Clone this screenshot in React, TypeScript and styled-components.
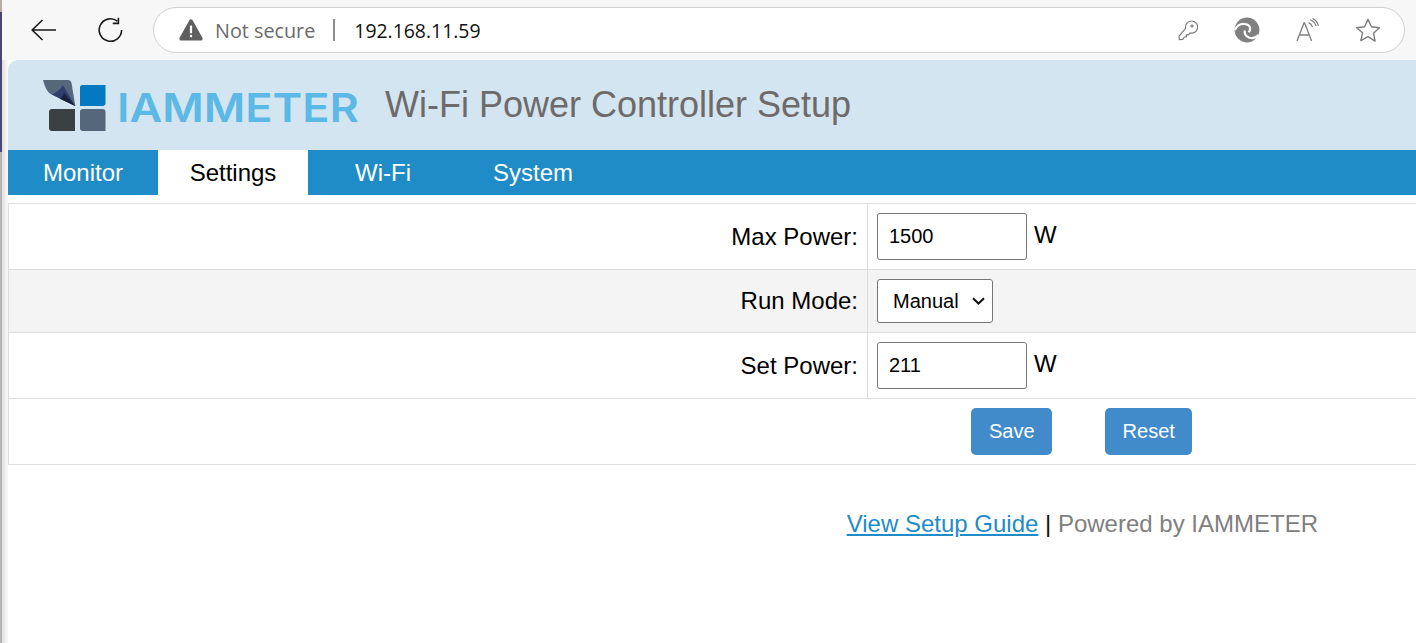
import React from 'react';
import styled, { createGlobalStyle } from 'styled-components';

const GlobalStyle = createGlobalStyle`
  html, body {
    margin: 0;
    padding: 0;
    height: 100%;
    overflow: hidden;
    background: #fff;
  }
  #root {
    height: 100%;
  }
  * {
    box-sizing: border-box;
  }
`;

const tabs = ['Monitor', 'Settings', 'Wi-Fi', 'System'];

const chevron =
  "url(\"data:image/svg+xml,%3Csvg xmlns='http://www.w3.org/2000/svg' width='13' height='8' viewBox='0 0 13 8'%3E%3Cpath d='M1 1.200l5.500 5.300L12 1.200' fill='none' stroke='%23111' stroke-width='2'/%3E%3C/svg%3E\")";

function BackIcon() {
  return (
    <svg width="28" height="24" viewBox="0 0 28 24" fill="none" stroke="#1a1a1a" strokeWidth="1.6">
      <path d="M26 12H2.500M12.500 2 2.200 12l10.300 10" />
    </svg>
  );
}

function ReloadIcon() {
  return (
    <svg width="26" height="26" viewBox="0 0 26 26" fill="none" stroke="#1a1a1a" strokeWidth="1.6">
      <path d="M19.300 4.200A11.200 11.200 0 1 0 23.600 13" />
      <path d="M20.400 0.800v5.600h-5.600" />
    </svg>
  );
}

function WarningIcon() {
  return (
    <svg width="24" height="22" viewBox="0 0 24 22">
      <path
        d="M10.400 1.200c.7-1.200 2.500-1.200 3.200 0l9.800 17.600c.7 1.200-.2 2.700-1.600 2.700H2.200c-1.400 0-2.300-1.500-1.600-2.700z"
        fill="#5f5f5f"
      />
      <rect x="10.900" y="6.600" width="2.200" height="7.600" fill="#fff" />
      <rect x="10.900" y="15.800" width="2.200" height="2.400" fill="#fff" />
    </svg>
  );
}

function KeyIcon() {
  return (
    <svg width="20" height="21" viewBox="0 0 20 21" fill="none" stroke="#7d7d7d" strokeWidth="1.2">
      <path d="M7.600 8.300a6.100 6.100 0 1 1 4.500 4.700l-1.700 1.800H8.400v2.200H6.300l-1.500 2.400-3.500.300-.3-3.400z" />
      <circle cx="14" cy="6" r="1" />
    </svg>
  );
}

function EdgeIcon() {
  return (
    <svg width="26" height="26" viewBox="0 0 26 26">
      <circle cx="13" cy="13" r="12.400" fill="#808080" />
      <path
        d="M0.800 13C3 8.800 6.500 6.600 10.500 7c3.400.3 5.700 2.300 5.600 5 0 1.300-.6 2.400-1.500 3.200"
        fill="none"
        stroke="#fff"
        strokeWidth="2.200"
      />
      <path d="M10.800 13.500c-.6 2.800.9 5.600 4.200 7 3.300 1.200 6.800.3 9.400-2.600" fill="none" stroke="#fff" strokeWidth="2.200" />
    </svg>
  );
}

function ReadAloudIcon() {
  return (
    <svg width="23" height="24" viewBox="0 0 23 24" fill="none" stroke="#7d7d7d" strokeWidth="1.3">
      <path d="M1 23 8 5h.6L15.600 23M3.400 17h10.400" />
      <path d="M12.500 4.600c2 .8 3.400 2.400 4 4.400M14.200 1.800c3 1.100 5 3.300 5.800 6.200M16.600.4c2.800 1.300 5 4 5.800 7.400" strokeWidth="1.200" />
    </svg>
  );
}

function StarIcon() {
  return (
    <svg width="26" height="24" viewBox="0 0 26 24" fill="none" stroke="#7d7d7d" strokeWidth="1.4" strokeLinejoin="round">
      <path d="m13 1.400 3.400 7.400 8 .9-5.900 5.500 1.600 7.900L13 18.700l-7.100 4 1.600-7.900L1.600 9.700l8-.9z" />
    </svg>
  );
}

function LogoMark() {
  return (
    <svg width="63" height="51" viewBox="0 0 63 51">
      <path d="M0 0h25c2 0 3 1 3.500 3L32.300 26 8.300 14.300C3.500 12 1.800 6 0 0z" fill="#55677a" />
      <path d="M8.300 14.300c4.500-.8 8-4 11.700-9L32.300 26z" fill="#2f3f70" />
      <path d="M16.700 18.700c2-1 3.500-3.200 4.300-6L32.300 26z" fill="#1b2338" />
      <path d="M37 7.500C37 6 38 5 39.500 5h23v18c0 1.800-1.200 3-3 3H37z" fill="#0279c1" />
      <path d="M6 32c0-2 1-3 3-3h23v22H9c-2 0-3-1-3-3z" fill="#3b4042" />
      <path d="M37 32c0-2 1-3 3-3h19.500c2 0 3 1 3 3v19H40c-2 0-3-1-3-3z" fill="#55677a" />
    </svg>
  );
}

export default function App() {
  return (
    <>
      <GlobalStyle />
      <Shell>
        <DesktopEdge>
          <EdgeTop />
          <EdgeBody />
          <EdgeRest />
        </DesktopEdge>
        <Browser>
          <Toolbar>
            <BackSlot>
              <BackIcon />
            </BackSlot>
            <ReloadSlot>
              <ReloadIcon />
            </ReloadSlot>
            <AddressBar>
              <WarningIcon />
              <NotSecure>Not secure</NotSecure>
              <Separator />
              <Url>192.168.11.59</Url>
              <AddressActions>
                <KeyIcon />
                <EdgeIcon />
                <ReadAloudIcon />
                <StarIcon />
              </AddressActions>
            </AddressBar>
          </Toolbar>
          <Page>
            <Header>
              <LogoMark />
              <LogoText>IAMMETER</LogoText>
              <Title>Wi-Fi Power Controller Setup</Title>
            </Header>
            <Nav>
              {tabs.map(tab => (
                <Tab key={tab} $active={tab === 'Settings'}>
                  {tab}
                </Tab>
              ))}
            </Nav>
            <FormTable>
              <Row $height={66}>
                <LabelCell>Max Power:</LabelCell>
                <ValueCell>
                  <NumberInput type="text" defaultValue="1500" />
                  <Unit>W</Unit>
                </ValueCell>
              </Row>
              <Row $height={63} $shaded>
                <LabelCell>Run Mode:</LabelCell>
                <ValueCell>
                  <ModeSelect defaultValue="Manual">
                    <option>Manual</option>
                    <option>Auto</option>
                  </ModeSelect>
                </ValueCell>
              </Row>
              <Row $height={66}>
                <LabelCell>Set Power:</LabelCell>
                <ValueCell>
                  <NumberInput type="text" defaultValue="211" />
                  <Unit>W</Unit>
                </ValueCell>
              </Row>
              <ButtonRow>
                <ActionButton>Save</ActionButton>
                <ActionButton>Reset</ActionButton>
              </ButtonRow>
            </FormTable>
            <Footer>
              <GuideLink href="#">View Setup Guide</GuideLink>
              <FooterBar> | </FooterBar>
              <Powered>Powered by IAMMETER</Powered>
            </Footer>
          </Page>
        </Browser>
      </Shell>
    </>
  );
}

const Shell = styled.div`
  display: flex;
  height: 100%;
  font-family: 'Liberation Sans', Arial, sans-serif;
`;

const DesktopEdge = styled.div`
  width: 2px;
  flex: none;
  display: flex;
  flex-direction: column;
`;

const EdgeTop = styled.div`
  height: 12px;
  background: #b9aca6;
`;

const EdgeBody = styled.div`
  height: 140px;
  background: #4b4670;
`;

const EdgeRest = styled.div`
  flex: 1;
  background: #b4b4b4;
`;

const Browser = styled.div`
  flex: 1;
  min-width: 0;
  display: flex;
  flex-direction: column;
  background: linear-gradient(90deg, #dedede 0, #f7f7f7 5px);
`;

const Toolbar = styled.div`
  height: 60px;
  flex: none;
  background: #f7f7f7;
  display: flex;
  align-items: flex-start;
  padding: 7px 11px 0 28px;
`;

const BackSlot = styled.div`
  width: 28px;
  height: 46px;
  display: flex;
  align-items: center;
  margin-right: 40px;
`;

const ReloadSlot = styled.div`
  width: 26px;
  height: 46px;
  display: flex;
  align-items: center;
  margin-right: 29px;
`;

const AddressBar = styled.div`
  flex: 1;
  height: 46px;
  background: #fff;
  border: 1px solid #d0d0d0;
  border-radius: 23px;
  display: flex;
  align-items: center;
  padding: 0 23px 0 25px;
`;

const NotSecure = styled.span`
  font-family: 'Open Sans', sans-serif;
  font-size: 19.800px;
  color: #6a6a6a;
  margin-left: 12px;
`;

const Separator = styled.div`
  width: 2px;
  height: 22px;
  background: #8f8f8f;
  margin: 0 19px 0 18px;
`;

const Url = styled.span`
  font-family: 'Open Sans', sans-serif;
  font-size: 19.400px;
  color: #111;
`;

const AddressActions = styled.div`
  margin-left: auto;
  display: flex;
  align-items: center;
  gap: 36px;
`;

const Page = styled.div`
  flex: 1;
  margin-left: 6px;
  min-height: 0;
  background: #fff;
`;

const Header = styled.div`
  height: 90px;
  background: #d3e5f1;
  border-top-left-radius: 10px;
  display: flex;
  align-items: center;
  padding-left: 35px;
`;

const LogoText = styled.span`
  width: 240px;
  margin: 6px 0 0 11px;
  font-family: Inter, 'Liberation Sans', sans-serif;
  font-weight: 600;
  font-size: 40px;
  line-height: 1;
  white-space: nowrap;
  color: #5cb9e6;
  transform: scaleX(1.125);
  transform-origin: left center;
`;

const Title = styled.h1`
  margin: 0 0 0 28px;
  font-family: 'Liberation Sans', Arial, sans-serif;
  font-size: 36px;
  font-weight: 400;
  color: #6f6a6a;
`;

const Nav = styled.div`
  height: 45px;
  background: #1f8cc7;
  display: flex;
`;

const Tab = styled.div<{ $active?: boolean }>`
  width: 150px;
  display: flex;
  align-items: center;
  justify-content: center;
  font-size: 24px;
  color: ${p => (p.$active ? '#000' : '#fff')};
  background: ${p => (p.$active ? '#fff' : 'transparent')};
`;

const FormTable = styled.div`
  margin-top: 8px;
  border-top: 1px solid #ddd;
  border-left: 1px solid #ddd;
`;

const Row = styled.div<{ $height: number; $shaded?: boolean }>`
  height: ${p => p.$height}px;
  display: flex;
  border-bottom: 1px solid #ddd;
  background: ${p => (p.$shaded ? '#f4f4f4' : '#fff')};
`;

const LabelCell = styled.div`
  width: 859px;
  flex: none;
  display: flex;
  align-items: center;
  justify-content: flex-end;
  padding-right: 9px;
  border-right: 1px solid #ddd;
  font-size: 24px;
  color: #000;
`;

const ValueCell = styled.div`
  flex: 1;
  display: flex;
  align-items: center;
  padding-left: 9px;
  font-size: 24px;
  color: #000;
`;

const NumberInput = styled.input`
  width: 150px;
  height: 47px;
  padding: 0 11px;
  background: #fff;
  border: 1px solid #767676;
  border-radius: 3px;
  font-family: 'Liberation Sans', Arial, sans-serif;
  font-size: 20px;
  color: #000;
`;

const Unit = styled.span`
  margin: 0 0 3px 7px;
`;

const ModeSelect = styled.select`
  appearance: none;
  width: 116px;
  height: 44px;
  padding: 0 0 0 15px;
  background: #fff ${chevron} no-repeat right 7px center;
  border: 1px solid #767676;
  border-radius: 3px;
  font-family: 'Liberation Sans', Arial, sans-serif;
  font-size: 20px;
  color: #000;
`;

const ButtonRow = styled.div`
  height: 66px;
  display: flex;
  align-items: center;
  gap: 53px;
  padding-left: 962px;
  border-bottom: 1px solid #ddd;
  background: #fff;
`;

const ActionButton = styled.button`
  height: 47px;
  padding: 0 17px 0 18px;
  background: #428bca;
  border: 0;
  border-radius: 5px;
  font-family: 'Liberation Sans', Arial, sans-serif;
  font-size: 20px;
  color: #fff;
`;

const Footer = styled.div`
  margin-top: 45px;
  padding-right: 98px;
  display: flex;
  justify-content: flex-end;
  white-space: pre;
  font-size: 24px;
`;

const GuideLink = styled.a`
  color: #1f8cc7;
  text-decoration: underline;
`;

const FooterBar = styled.span`
  color: #111;
`;

const Powered = styled.span`
  color: #808080;
`;
